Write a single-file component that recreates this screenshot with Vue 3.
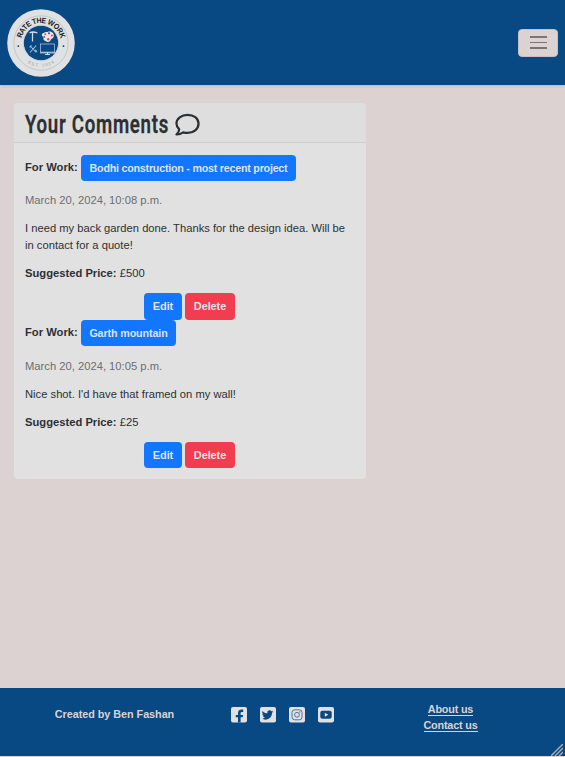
<script setup>
const comments = [
  { work: 'Bodhi construction - most recent project', date: 'March 20, 2024, 10:08 p.m.', text: "I need my back garden done. Thanks for the design idea. Will be in contact for a quote!", price: '£500' },
  { work: 'Garth mountain', date: 'March 20, 2024, 10:05 p.m.', text: "Nice shot. I'd have that framed on my wall!", price: '£25' },
]
</script>

<template>
  <div class="page">
    <header class="nav">
      <svg class="logo" viewBox="0 -.5 68 68">
        <defs>
          <path id="topArc" d="M14 33.5a20 20 0 0 1 40 0" />
          <path id="bottomArc" d="M10.2 33.5a23.8 23.8 0 0 0 47.6 0" />
        </defs>
        <circle cx="34" cy="33.5" r="33.8" fill="#e0e1e2" />
        <circle cx="34" cy="33.5" r="27.2" fill="none" stroke="#b4b4b5" stroke-width=".6" />
        <circle cx="34" cy="33.5" r="17.2" fill="#084883" />
        <circle cx="34" cy="33.5" r="17.9" fill="none" stroke="#b9bec4" stroke-width=".4" />
        <text class="ring-title" text-anchor="middle" textLength="53" lengthAdjust="spacingAndGlyphs"><textPath href="#topArc" startOffset="50%">RATE THE WORK</textPath></text>
        <text class="ring-small" text-anchor="middle"><textPath href="#bottomArc" startOffset="50%" textLength="28">EST. 2024</textPath></text>
        <circle cx="11.3" cy="36.6" r=".9" fill="#333" />
        <circle cx="56.5" cy="36.6" r=".9" fill="#333" />
        <path d="M22.5 23.5q3-2 8 0M25.5 22.5v9.5" fill="none" stroke="#ccd8e3" stroke-width="1.3" />
        <path d="M40.5 22.5c4-1.5 7 1.2 6.2 4.8-.4 2-2.5 1.5-3 3.2-.7 2.6-4.6 2.5-6.8.1-1.2-1.4.3-2.3-.9-3.4-3-2.2.2-4.7 4.5-4.7z" fill="#f1e2e6" />
        <circle cx="38.2" cy="24.8" r="1" fill="#ef4451" />
        <circle cx="42" cy="23.7" r="1" fill="#294f9a" />
        <circle cx="44.9" cy="26.1" r="1" fill="#ef4451" />
        <circle cx="37.3" cy="27.4" r=".8" fill="#294f9a" />
        <circle cx="41.2" cy="29.8" r="1.2" fill="#ef4451" />
        <path d="m23.2 36.5 6 6.5m0-7-6.2 7m1.5-7.2-2 2m5.7 2.5 1.8 1.8" fill="none" stroke="#a9bdce" stroke-width="1.1" />
        <rect x="33.5" y="34.5" width="14" height="9" fill="none" stroke="#a9bdce" stroke-width=".8" />
        <path d="M33.5 42.8h14M40.5 43v2m-2.5 0h5" fill="none" stroke="#ccd8e3" stroke-width="1.1" />
      </svg>
      <button class="toggler" aria-label="Menu"><i></i><i></i><i></i></button>
    </header>

    <main class="main">
      <section class="card">
        <div class="card-head">
          <svg class="heading" role="heading" aria-level="1" width="144" height="32" viewBox="0 0 144 32">
            <text x="0" y="24.4" textLength="144" lengthAdjust="spacingAndGlyphs">Your Comments</text>
          </svg>
          <svg class="bubble" viewBox="0 0 512 512"><path d="M256 57C132 57 30 137 30 236c0 45 20 84 54 115 3 40-17 74-52 108 51 2 99-17 135-42 28 8 58 13 89 13 124 0 226-80 226-194S380 57 256 57Z" fill="none" stroke="#2d3033" stroke-width="46" stroke-linejoin="round" /></svg>
        </div>
        <div class="card-body">
          <article v-for="c in comments" :key="c.work" class="comment">
            <div class="work"><strong>For Work:</strong><a class="btn primary">{{ c.work }}</a></div>
            <p class="date">{{ c.date }}</p>
            <p class="text">{{ c.text }}</p>
            <p class="price"><strong>Suggested Price:</strong> {{ c.price }}</p>
            <div class="actions"><button class="btn primary">Edit</button><button class="btn danger">Delete</button></div>
          </article>
        </div>
      </section>
    </main>

    <footer class="footer">
      <div class="credit">Created by Ben Fashan</div>
      <div class="social">
        <svg viewBox="0 0 16 16"><rect width="16" height="15.5" rx="2" fill="#e0e1e2" /><path d="M7 15.5v-5.2H4.8V7.9H7V6.2C7 3.8 8.3 2.6 10.4 2.6c.8 0 1.5.1 1.8.2v2.1h-1.1c-1.2 0-1.5.6-1.5 1.4v1.6h2.5l-.4 2.4H9.6v5.2z" fill="#084883" /></svg>
        <svg viewBox="0 0 16 16"><rect width="16" height="15.5" rx="2" fill="#e0e1e2" /><path d="M13.2 4.5c-.4.2-.8.3-1.3.4.5-.3.8-.7 1-1.2-.5.2-1 .4-1.5.5a2.3 2.3 0 0 0-4 2.1c-2-.1-3.7-1-4.8-2.4-.7 1.2-.3 2.4.7 3.1-.4 0-.7-.1-1-.3 0 1.1.8 2.1 1.8 2.3-.3.1-.7.1-1 0 .3.9 1.1 1.6 2.1 1.6a4.7 4.7 0 0 1-3.4 1c4.6 2.8 10.3-.2 10.2-5.8.5-.3.9-.8 1.2-1.3z" fill="#084883" /></svg>
        <svg viewBox="0 0 16 16"><rect width="16" height="15.5" rx="2" fill="#e0e1e2" /><g fill="none" stroke="#52769c"><rect x="3" y="2.8" width="10" height="10" rx="2.7" /><circle cx="8" cy="7.8" r="2.4" /></g><circle cx="10.9" cy="4.9" r=".7" fill="#52769c" /></svg>
        <svg viewBox="0 0 16 16"><rect width="16" height="15.5" rx="2" fill="#e0e1e2" /><rect x="2.3" y="3.8" width="11.4" height="8" rx="2" fill="#084883" /><path d="m6.8 5.8 3.5 2-3.5 2z" fill="#e0e1e2" /></svg>
      </div>
      <nav class="links"><a>About us</a><a>Contact us</a></nav>
      <svg class="grip" viewBox="0 0 12 12"><path d="M0 12 12 0M4 12l8-8M8 12l4-4" stroke="#b4aeb2" stroke-width="1.4" /></svg>
    </footer>
  </div>
</template>

<style>
body { background: #dcd2d1; }
</style>

<style scoped>
.page { box-sizing: border-box; height: 757px; display: flex; flex-direction: column; background: #dcd2d1; color: #2d3033; font: 11.2px/17px "Liberation Sans", Arial, sans-serif; letter-spacing: .01px; overflow: hidden; }
.nav { height: 85px; flex: none; box-sizing: border-box; padding: 0 7px; display: flex; align-items: center; justify-content: space-between; background: #084883; box-shadow: 0 1px 3px #0002; }
.logo { width: 68px; height: 68px; }
.ring-title { font: 700 7.7px "Liberation Sans", sans-serif; letter-spacing: -.5px; fill: #202326; }
.ring-small { font: 4.2px "Liberation Sans", sans-serif; letter-spacing: 0; fill: #9a9b9c; }
.toggler { width: 40px; height: 28px; box-sizing: border-box; padding: 0; border: 1px solid #c9bfc1; border-radius: 4px; background: #dcd2d1; display: flex; flex-direction: column; align-items: center; justify-content: center; gap: 4px; }
.toggler i { width: 17px; height: 1.5px; background: #797476; }
.main { flex: 1; padding: 18px 14px 0; }
.card { width: 352px; height: 376px; box-sizing: border-box; background: #e1e1e1; border-radius: 4px; overflow: hidden; }
.card-head { height: 40px; box-sizing: border-box; padding: 6px 11px 0; display: flex; gap: 6px; background: #dedede; border-bottom: 1px solid #cecece; }
.heading { overflow: visible; }
.heading text { font: 600 26.5px Roboto, sans-serif; letter-spacing: 1px; fill: #2d3033; stroke: #2d3033; stroke-width: .3px; }
.bubble { width: 25px; height: 25px; margin-top: 3px; }
.card-body { padding: 12px 11px 0; }
.work { height: 26px; display: flex; align-items: center; gap: 4px; }
.work strong { width: 52px; white-space: nowrap; line-height: 17px; padding-bottom: 2px; }
.btn { box-sizing: border-box; height: 26px; padding: 0; border: 0; border-radius: 4px; font: 700 11px/27px "Liberation Sans", Arial, sans-serif; letter-spacing: -.1px; text-align: center; color: #dce2ec; white-space: nowrap; }
.work .btn { width: 215px; font-size: 10.7px; letter-spacing: -.22px; }
.comment:last-child .work .btn { width: 95px; letter-spacing: -.1px; }
.primary { background: #1277fe; }
.danger { background: #f23c4f; }
.actions .primary { width: 38px; }
.actions .danger { width: 50px; }
p { margin: 0; }
.date { margin-top: 11px; color: #6c6e71; }
.comment:last-child .date { margin-top: 12px; }
.text { margin-top: 11px; }
.price { margin-top: 11px; }
.actions { margin-top: 11px; padding-right: 1px; display: flex; justify-content: center; gap: 3px; }
.comment:first-child .actions .btn { height: 27px; }
.footer { position: relative; height: 69px; flex: none; box-sizing: border-box; padding: 13px 0 0; display: grid; grid-template-columns: 228px 110px 225px; align-items: start; background: #084883; border-bottom: 1px solid #dcd2d1; color: #d9d3d6; font-size: 10.8px; font-weight: 700; letter-spacing: -.03px; }
.credit { text-align: center; padding: 5px 0 0 1px; }
.social { display: flex; justify-content: center; gap: 13px; padding: 6px 2px 0 0; }
.social svg { width: 16px; height: 16px; }
.links { display: flex; flex-direction: column; align-items: center; gap: 3px; padding-top: 2px; letter-spacing: -.18px; }
.links a { border-bottom: 1px solid #d9d3d6; line-height: 12px; }
.grip { position: absolute; right: 2px; bottom: 0; width: 12px; height: 12px; }
</style>
